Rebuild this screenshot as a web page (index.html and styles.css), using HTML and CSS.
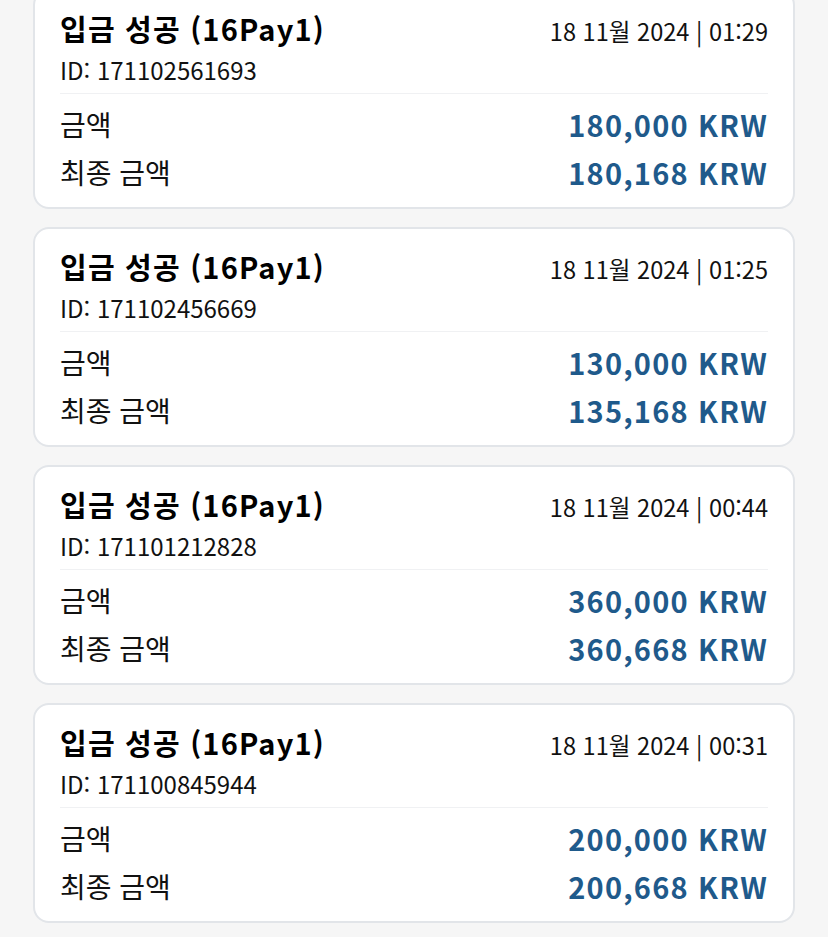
FILE: index.html
```html
<!DOCTYPE html>
<html lang="ko">
<head>
  <meta charset="UTF-8">
  <title>입금 내역</title>
  <link rel="stylesheet" href="styles.css">
</head>
<body>

  <div class="list">

    <div class="card">
      <div class="card-head">
        <div>
          <div class="title">입금 성공 (16Pay1)</div>
          <div class="tx-id">ID: 171102561693</div>
        </div>
        <div class="date">18 11월 2024 | 01:29</div>
      </div>
      <div class="row"><span>금액</span><span class="amount">180,000 KRW</span></div>
      <div class="row"><span>최종 금액</span><span class="amount">180,168 KRW</span></div>
    </div>

    <div class="card">
      <div class="card-head">
        <div>
          <div class="title">입금 성공 (16Pay1)</div>
          <div class="tx-id">ID: 171102456669</div>
        </div>
        <div class="date">18 11월 2024 | 01:25</div>
      </div>
      <div class="row"><span>금액</span><span class="amount">130,000 KRW</span></div>
      <div class="row"><span>최종 금액</span><span class="amount">135,168 KRW</span></div>
    </div>

    <div class="card">
      <div class="card-head">
        <div>
          <div class="title">입금 성공 (16Pay1)</div>
          <div class="tx-id">ID: 171101212828</div>
        </div>
        <div class="date">18 11월 2024 | 00:44</div>
      </div>
      <div class="row"><span>금액</span><span class="amount">360,000 KRW</span></div>
      <div class="row"><span>최종 금액</span><span class="amount">360,668 KRW</span></div>
    </div>

    <div class="card">
      <div class="card-head">
        <div>
          <div class="title">입금 성공 (16Pay1)</div>
          <div class="tx-id">ID: 171100845944</div>
        </div>
        <div class="date">18 11월 2024 | 00:31</div>
      </div>
      <div class="row"><span>금액</span><span class="amount">200,000 KRW</span></div>
      <div class="row"><span>최종 금액</span><span class="amount">200,668 KRW</span></div>
    </div>

  </div>

</body>
</html>
```

FILE: styles.css
```css
body {
  margin: 0;
  background-color: #f6f6f6;
  font-family: "Noto Sans CJK KR", "Noto Sans", sans-serif;
  color: #111;
}

.list {
  display: flex;
  flex-direction: column;
  gap: 18px;
  margin-top: -11px;
  padding: 0 33px 20px;
}

.card {
  background-color: #fff;
  border: 2px solid #e2e5e9;
  border-radius: 16px;
  padding: 19px 25px 17px;
}

.card-head {
  display: flex;
  justify-content: space-between;
  align-items: flex-start;
  border-bottom: 1px solid #f0f1f3;
  padding-bottom: 8px;
  margin-bottom: 12px;
}

.title {
  color: #000;
  font-size: 29px;
  font-weight: bold;
  line-height: 36px;
  letter-spacing: 1.2px;
}

.tx-id {
  font-size: 24px;
  line-height: 30px;
  margin-top: 9px;
}

.date {
  font-size: 23.6px;
  line-height: 36px;
  margin-top: 3px;
}

.row {
  display: flex;
  justify-content: space-between;
  align-items: center;
  font-size: 28px;
  line-height: 36px;
}

.row + .row { margin-top: 12px; }

.amount {
  color: #1f5a8b;
  font-weight: bold;
  font-size: 29px;
  letter-spacing: 1.2px;
}
```
